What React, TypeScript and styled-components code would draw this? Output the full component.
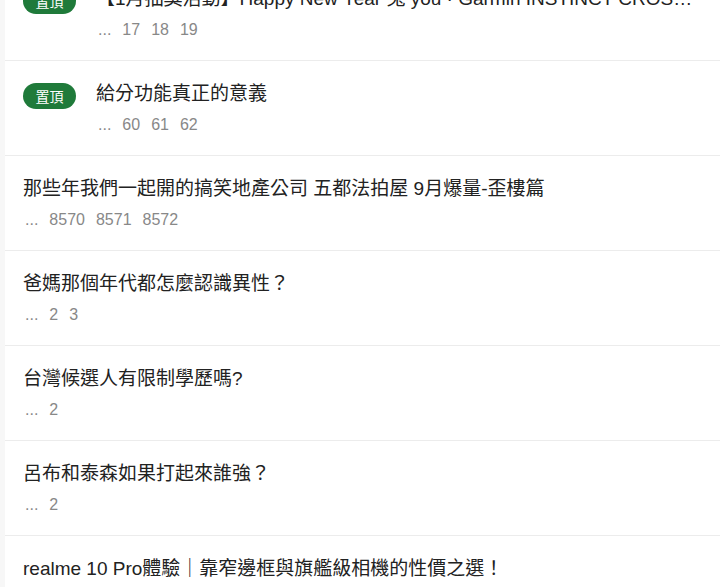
import React from "react";
import styled, { createGlobalStyle } from "styled-components";

const Global = createGlobalStyle`
  html, body { margin: 0; padding: 0; background: #f7f7f7; overflow: hidden; }
  body { font-family: "Liberation Sans", Arial, "Noto Sans CJK TC", sans-serif; }
`;

const Panel = styled.div`
  margin-left: 5px;
  margin-top: -34px;
  background: #fff;
`;

const Row = styled.div`
  height: 95px;
  box-sizing: border-box;
  border-bottom: 1px solid #ececec;
  display: flex;
  align-items: flex-start;
  padding: 21px 18px 0 18px;
  gap: 20px;
`;

const Badge = styled.span`
  flex: none;
  width: 53px;
  height: 26px;
  border-radius: 13px;
  background: #1f7a3a;
  color: #fff;
  font-size: 14px;
  line-height: 26px;
  text-align: center;
  font-family: "Noto Sans CJK TC", sans-serif;
  margin-top: 1px;
`;

const Body = styled.div`
  min-width: 0;
  flex: 1;
  display: flex;
  flex-direction: column;
  gap: 9px;
`;

const Title = styled.div`
  font-size: 19px;
  line-height: 24px;
  color: #222;
  white-space: nowrap;
  overflow: hidden;
  text-overflow: ellipsis;
`;

const Pages = styled.div`
  display: flex;
  gap: 11px;
  padding-left: 2px;
  font-size: 16px;
  line-height: 20px;
  color: #888;
`;

type Item = { pinned?: boolean; title: string; pages?: string[] };

const items: Item[] = [
  {
    pinned: true,
    title:
      "【1月抽獎活動】Happy New Year 兔 you · Garmin INSTINCT CROSSOVER 混合智能腕錶體驗分享",
    pages: ["17", "18", "19"],
  },
  { pinned: true, title: "給分功能真正的意義", pages: ["60", "61", "62"] },
  {
    title: "那些年我們一起開的搞笑地產公司 五都法拍屋 9月爆量-歪樓篇",
    pages: ["8570", "8571", "8572"],
  },
  { title: "爸媽那個年代都怎麼認識異性？", pages: ["2", "3"] },
  { title: "台灣候選人有限制學歷嗎?", pages: ["2"] },
  { title: "呂布和泰森如果打起來誰強？", pages: ["2"] },
  { title: "realme 10 Pro體驗｜靠窄邊框與旗艦級相機的性價之選！" },
];

export default function App() {
  return (
    <>
      <Global />
      <Panel>
        {items.map((it, i) => (
          <Row key={i}>
            {it.pinned && <Badge>置頂</Badge>}
            <Body>
              <Title>{it.title}</Title>
              {it.pages && (
                <Pages>
                  <span>...</span>
                  {it.pages.map((p) => (
                    <span key={p}>{p}</span>
                  ))}
                </Pages>
              )}
            </Body>
          </Row>
        ))}
      </Panel>
    </>
  );
}
